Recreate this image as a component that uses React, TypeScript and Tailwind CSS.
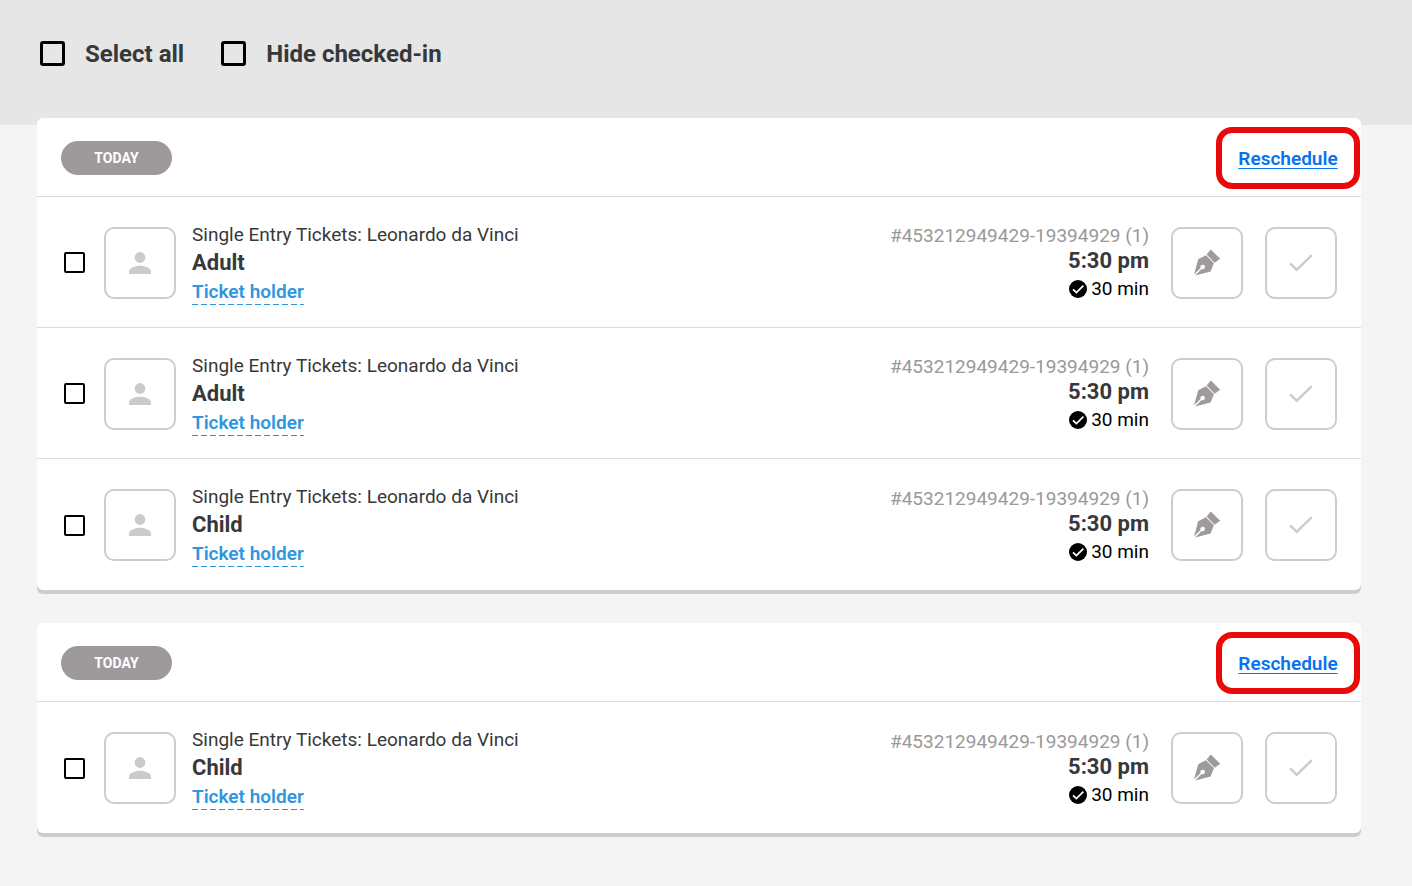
import React from "react";

type Ticket = { id: string; kind: string };

const groups: { id: string; tickets: Ticket[] }[] = [
  {
    id: "first",
    tickets: [
      { id: "a1", kind: "Adult" },
      { id: "a2", kind: "Adult" },
      { id: "c1", kind: "Child" },
    ],
  },
  { id: "second", tickets: [{ id: "c2", kind: "Child" }] },
];

function FilterOption({ label }: { label: string }) {
  return (
    <label className="flex items-center gap-5 text-2xl font-bold">
      <input
        type="checkbox"
        className="size-[25px] appearance-none rounded-[3px] border-3 border-black checked:bg-black"
      />
      <span className="pt-0.5">{label}</span>
    </label>
  );
}

function PersonIcon() {
  return (
    <svg viewBox="0 0 22 22" className="size-[22px] fill-[#cbcbcd]" aria-hidden="true">
      <circle cx="11" cy="5.5" r="5.4" />
      <path d="M0 22v-2.8c0-3.6 7.3-5.5 11-5.5s11 1.9 11 5.5V22z" />
    </svg>
  );
}

function PenIcon() {
  return (
    <svg viewBox="0 0 28 28" className="size-7" aria-hidden="true">
      <path
        fill="#a09b9b"
        d="M13.6 5.6 17.8 .6 27.2 9.8 21.6 13.8zM12.9 6.2 20.9 14.2 17.6 22.4 2.2 26.5 8.6 20A2.3 2.3 0 1 0 7.6 19L1 25.5 5.2 10.2z"
      />
    </svg>
  );
}

function CheckIcon() {
  return (
    <svg viewBox="0 0 24 18" className="h-[18px] w-6" aria-hidden="true">
      <path d="M1.2 9.3 7.7 15.8 22.8 1.2" fill="none" stroke="#cbcbcd" strokeWidth="2.5" />
    </svg>
  );
}

function DoneIcon() {
  return (
    <svg viewBox="0 0 18 18" className="size-[18px]" aria-hidden="true">
      <circle cx="9" cy="9" r="9" />
      <path d="M4 9.3 7.4 12.6 14.4 5.6" fill="none" stroke="#fff" strokeWidth="1.8" />
    </svg>
  );
}

const tile =
  "flex size-[72px] shrink-0 items-center justify-center rounded-[10px] border-2 border-[#cdcdcd] bg-white";

function TicketRow({ ticket }: { ticket: Ticket }) {
  return (
    <li className="flex h-[131px] items-center border-b border-[#dcdcdc] pt-px pr-6 pl-[27px] last:border-b-0">
      <input
        type="checkbox"
        aria-label={`Select ${ticket.kind} ticket`}
        className="mr-[19px] size-[21px] shrink-0 appearance-none rounded-[2px] border-2 border-black checked:bg-black"
      />
      <div className={tile}>
        <PersonIcon />
      </div>
      <div className="ml-4 flex-1">
        <p className="text-[19px] leading-7">Single Entry Tickets: Leonardo da Vinci</p>
        <p className="text-[22px] leading-7 font-bold">{ticket.kind}</p>
        <a
          href="#holder"
          className="mt-[3px] inline-block bg-[repeating-linear-gradient(90deg,#2f96e0_0_6px,transparent_6px_9px)] bg-[length:100%_1px] bg-bottom bg-no-repeat pb-px text-[19px] leading-6 font-semibold text-[#2f96e0]"
        >
          Ticket holder
        </a>
      </div>
      <div className="mr-[22px] pt-[3px] text-right">
        <p className="text-[19px] leading-[22px] text-[#999]">#453212949429-19394929 (1)</p>
        <p className="text-[22px] leading-7 font-bold">5:30 pm</p>
        <p className="flex items-center justify-end gap-1 text-[19px] leading-7 text-black">
          <DoneIcon />
          30 min
        </p>
      </div>
      <div className="flex gap-[22px]">
        <button type="button" aria-label="Sign" className={tile}>
          <PenIcon />
        </button>
        <button type="button" aria-label="Check in" className={tile}>
          <CheckIcon />
        </button>
      </div>
    </li>
  );
}

export default function App() {
  return (
    <div className="min-h-screen bg-[#f4f4f4] pb-12 font-['Roboto',sans-serif] text-[#37383a]">
      <header className="flex h-[125px] items-start gap-[37px] bg-[#e6e6e6] px-10 pt-9">
        <FilterOption label="Select all" />
        <FilterOption label="Hide checked-in" />
      </header>
      <main className="-mt-[7px] mr-[51px] ml-[37px] flex flex-col gap-[33px]">
        {groups.map((group) => (
          <section key={group.id} className="rounded-md bg-white shadow-[0_4px_0_#cdcdcd]">
            <div className="flex h-[79px] items-center justify-between border-b border-[#dcdcdc] pt-0.5 pr-px pl-6">
              <span className="flex h-[34px] w-[111px] items-center justify-center rounded-full bg-[#9e999a] text-sm font-bold text-white">
                TODAY
              </span>
              <div className="flex h-[62px] w-36 items-center justify-center rounded-2xl border-6 border-[#eb0808] pt-0.5">
                <a
                  href="#reschedule"
                  className="text-[19px] font-semibold text-[#0573f0] underline decoration-1 underline-offset-3"
                >
                  Reschedule
                </a>
              </div>
            </div>
            <ul>
              {group.tickets.map((ticket) => (
                <TicketRow key={ticket.id} ticket={ticket} />
              ))}
            </ul>
          </section>
        ))}
      </main>
    </div>
  );
}
